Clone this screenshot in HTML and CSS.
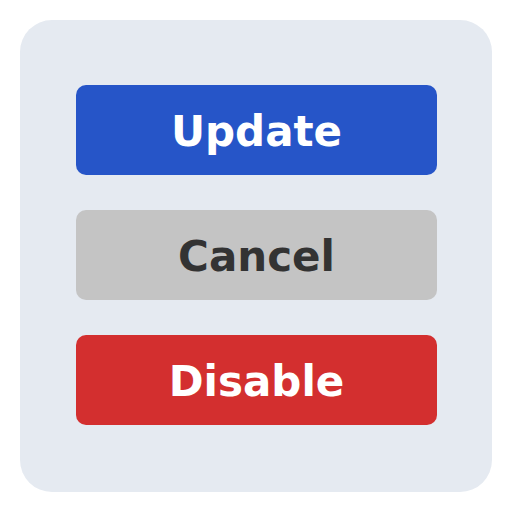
FILE: index.html
```html
<!DOCTYPE html>
<html lang="en">
<head>
  <meta charset="UTF-8">
  <title>Actions</title>
  <link rel="stylesheet" href="styles.css">
</head>
<body>
<div class="panel">
  <button class="btn btn-update">Update</button>
  <button class="btn btn-cancel">Cancel</button>
  <button class="btn btn-disable">Disable</button>
</div>
</body>
</html>
```
FILE: styles.css
```css
body {
  margin: 0;
  padding: 20px;
  background: #fff;
  font-family: 'DejaVu Sans', sans-serif;
}
.panel {
  width: 472px;
  height: 472px;
  box-sizing: border-box;
  background: #e5eaf1;
  border-radius: 32px;
  padding: 65px 55px 0 56px;
  display: flex;
  flex-direction: column;
  gap: 35px;
}
.btn {
  height: 90px;
  width: 361px;
  border: none;
  border-radius: 10px;
  font-family: 'DejaVu Sans', sans-serif;
  font-weight: bold;
  font-size: 42px;
  color: #fff;
  cursor: pointer;
  padding: 3px 0 0;
}
.btn-update {
  background: #2655c8;
}
.btn-cancel {
  background: #c4c4c4;
  color: #333;
}
.btn-disable {
  background: #d32f2f;
}
```
